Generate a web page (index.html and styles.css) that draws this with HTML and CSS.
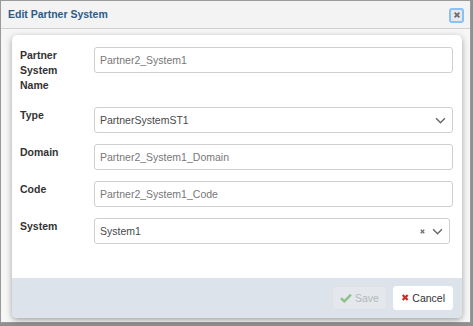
FILE: index.html
```html
<!DOCTYPE html>
<html lang="en">
<head>
<meta charset="UTF-8">
<title>Edit Partner System</title>
<meta name="viewport" content="width=device-width, initial-scale=1.0">
<link rel="stylesheet" href="styles.css">
</head>
<body>

<div class="dialog">
    <!-- title bar -->
    <div class="titlebar">
        <span class="title">Edit Partner System</span>
        <button class="close-btn" aria-label="Close">
            <svg viewBox="0 0 10 10"><path d="M2 2L8 8M8 2L2 8"/></svg>
        </button>
    </div>

    <div class="dialog-body">
        <div class="card">
            <div class="form">
                <div class="row">
                    <label class="label" for="name">Partner System Name</label>
                    <input class="field" id="name" type="text" value="Partner2_System1">
                </div>
                <div class="row">
                    <label class="label">Type</label>
                    <div class="field select">
                        <span class="value">PartnerSystemST1</span>
                        <svg class="chev" viewBox="0 0 12 8"><path d="M1 1.5L6 6.5L11 1.5"/></svg>
                    </div>
                </div>
                <div class="row">
                    <label class="label" for="domain">Domain</label>
                    <input class="field" id="domain" type="text" value="Partner2_System1_Domain">
                </div>
                <div class="row">
                    <label class="label" for="code">Code</label>
                    <input class="field" id="code" type="text" value="Partner2_System1_Code">
                </div>
                <div class="row">
                    <label class="label">System</label>
                    <div class="field select select-sys">
                        <span class="value">System1</span>
                        <svg class="clear" viewBox="0 0 10 10"><path d="M2.5 2.5L7.5 7.5M7.5 2.5L2.5 7.5"/></svg>
                        <svg class="chev" viewBox="0 0 12 8"><path d="M1 1.5L6 6.5L11 1.5"/></svg>
                    </div>
                </div>
            </div>

            <!-- footer buttons -->
            <div class="footer">
                <button class="btn btn-save" disabled>
                    <svg viewBox="0 0 12 10"><path d="M1 5.2L4.3 8.4L11 1.6"/></svg>Save
                </button>
                <button class="btn btn-cancel">
                    <svg viewBox="0 0 10 10"><path d="M2 2L8 8M8 2L2 8"/></svg>Cancel
                </button>
            </div>
        </div>
    </div>
</div>

</body>
</html>
```

FILE: styles.css
```css
/* ===== GLOBAL ===== */
*{box-sizing:border-box;margin:0;padding:0;}
body{
    font-family:"Liberation Sans",Arial,sans-serif;
    font-size:10.5px;
    color:#333;
    background:#8f8f8f;
    width:473px;
    height:326px;
    overflow:hidden;
}

/* ===== DIALOG FRAME ===== */
.dialog{
    width:471px;
    height:323px;
    border:1px solid #9a9a9a;
    background:#f6f6f6;
    display:flex;
    flex-direction:column;
}
.titlebar{
    height:28px;
    flex:none;
    display:flex;
    align-items:center;
    justify-content:space-between;
    padding:0 6px 0 7px;
    background:#f3f3f3;
    border-bottom:1px solid #cfcfcf;
}
.title{
    font-weight:700;
    font-size:10.5px;
    color:#2d5b88;
    margin-top:-1px;
}
.close-btn{
    width:15px;
    height:15px;
    border:2px solid #8cc0f5;
    border-radius:3px;
    background:#e9e9e9;
    display:flex;
    align-items:center;
    justify-content:center;
    margin-top:1px;
}
.close-btn svg{width:8px;height:8px;stroke:#6f6f6f;stroke-width:2.4;fill:none;}

.dialog-body{
    flex:1;
    padding:6px 8px 4px 11px;
    display:flex;
}

/* ===== CARD ===== */
.card{
    flex:1;
    background:#fff;
    border-radius:5px;
    box-shadow:0 2px 6px rgba(0,0,0,.35);
    display:flex;
    flex-direction:column;
    overflow:hidden;
}
.form{
    flex:1;
    padding:12px 9px 0 8px;
}
.row{
    display:flex;
    align-items:flex-start;
    margin-bottom:11px;
}
.label{
    width:66px;
    flex:none;
    margin-right:8px;
    font-weight:700;
    line-height:15px;
    padding-top:1px;
    padding-bottom:3px;
    color:#333;
}
.field{
    flex:1;
    height:26px;
    border:1px solid #cfcfcf;
    border-radius:3px;
    padding:0 5px;
    font-family:inherit;
    font-size:10.5px;
    color:#777;
    background:#fff;
}
.field:focus{outline:none;}
.select{
    display:flex;
    align-items:center;
    color:#4a4a4a;
}
.select .value{flex:1;}
.select-sys{margin-right:3px;}
.chev{width:11px;height:7px;stroke:#666;stroke-width:1.6;fill:none;margin-right:1px;}
.clear{width:7px;height:7px;stroke:#777;stroke-width:2.2;fill:none;margin-right:6px;}

/* ===== FOOTER ===== */
.footer{
    height:40px;
    flex:none;
    background:#dce3ea;
    display:flex;
    align-items:center;
    justify-content:flex-end;
    gap:6px;
    padding:0 9px 1px 0;
}
.btn{
    height:24px;
    border:1px solid transparent;
    border-radius:3px;
    font-family:inherit;
    font-size:10.5px;
    display:flex;
    align-items:center;
    padding:0 7px;
}
.btn svg{fill:none;margin-right:3px;}
.btn-save{
    width:55px;
    background:#e4e8ec;
    border-color:#dde2e7;
    color:#b4b8bc;
}
.btn-save svg{width:12px;height:10px;stroke:#8dc08d;stroke-width:2.4;}
.btn-cancel{
    width:60px;
    background:#fff;
    border-color:#fff;
    color:#333;
}
.btn-cancel svg{width:9px;height:9px;stroke:#c8302c;stroke-width:2.8;}
```
